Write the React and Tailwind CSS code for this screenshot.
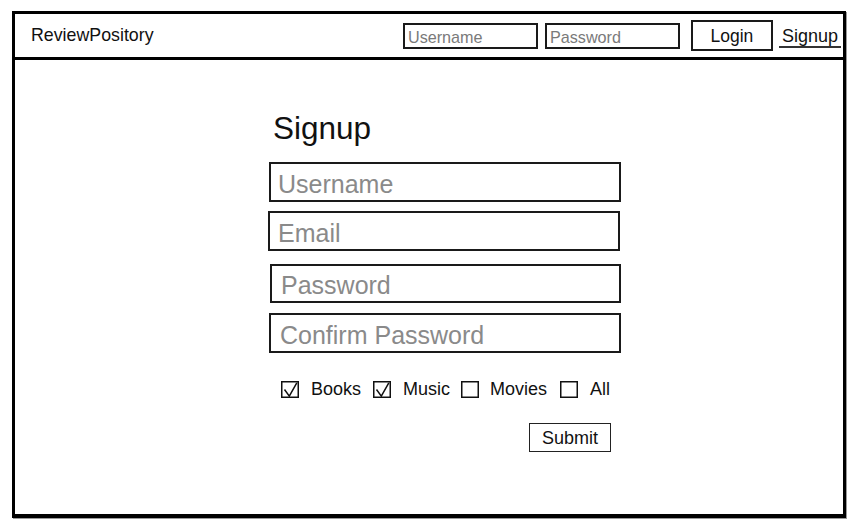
import React from "react";

const font = { fontFamily: '"Liberation Sans", Arial, Helvetica, sans-serif' };

function Box({ checked }) {
  return (
    <svg width="18" height="17" viewBox="0 0 18 17" className="shrink-0">
      <rect x="0.75" y="0.75" width="16.5" height="15.5" fill="white" stroke="#111" strokeWidth="1.5" />
      {checked && (
        <path d="M3.5 8.5 L8.3 15.2 L15.8 1.8" fill="none" stroke="#111" strokeWidth="1.5" strokeLinejoin="miter" />
      )}
    </svg>
  );
}

export default function App() {
  return (
    <div className="w-[860px] h-[530px] bg-white overflow-hidden font-['Liberation_Sans',Arial,sans-serif] text-[#111]" style={font}>
      <div className="ml-[12px] mt-[11px] w-[834px] h-[507px] border-[3px] border-b-[4px] border-black shadow-[1px_1px_0_#9a9a9a] flex flex-col">
        {/* header */}
        <div className="h-[46px] border-b-[3px] border-black flex items-center pl-[16px] pr-[2px] shrink-0">
          <div className="text-[17.8px] leading-none pt-[1px]">ReviewPository</div>
          <div className="ml-auto flex items-center">
            <input
              placeholder="Username"
              className="w-[135px] h-[26px] border-2 border-[#1a1a1a] pl-[3px] pt-[3px] text-[16.2px] leading-none outline-none placeholder:text-[#7a7a7a]"
            />
            <input
              type="password"
              placeholder="Password"
              className="ml-[7px] w-[135px] h-[26px] border-2 border-[#1a1a1a] pl-[3px] pt-[3px] text-[16.2px] leading-none outline-none placeholder:text-[#7a7a7a]"
            />
            <button className="ml-[11px] w-[82px] h-[31px] border-2 border-[#1a1a1a] text-[17.5px] leading-none flex items-center justify-center pt-[3px]">
              Login
            </button>
            <div className="ml-[6px] mt-[4px] px-[3px] pb-[1px] border-b-2 border-[#333] text-[18px] leading-none">
              Signup
            </div>
          </div>
        </div>

        {/* main */}
        <div className="flex-1 pt-[53px]">
          <div className="ml-[254px] w-[352px] flex flex-col">
            <div className="pl-[4px] text-[31.5px] leading-none h-[30px]">Signup</div>
            <input
              placeholder="Username"
              className="mt-[19px] w-[352px] h-[40px] border-2 border-[#1a1a1a] pl-[7px] pt-[4px] text-[25px] leading-none outline-none placeholder:text-[#8a8a8a]"
            />
            <input
              placeholder="Email"
              className="mt-[9px] -ml-[1px] w-[352px] h-[40px] border-2 border-[#1a1a1a] pl-[8px] pt-[4px] text-[25px] leading-none outline-none placeholder:text-[#8a8a8a]"
            />
            <input
              type="password"
              placeholder="Password"
              className="mt-[13px] ml-[1px] w-[351px] h-[39px] border-2 border-[#1a1a1a] pl-[9px] pt-[4px] text-[25px] leading-none outline-none placeholder:text-[#8a8a8a]"
            />
            <input
              type="password"
              placeholder="Confirm Password"
              className="mt-[10px] w-[352px] h-[40px] border-2 border-[#1a1a1a] pl-[9px] pt-[4px] text-[25px] leading-none outline-none placeholder:text-[#8a8a8a]"
            />

            <div className="mt-[27px] ml-[12px] h-[18px] flex items-center text-[18px] leading-none">
              <Box checked />
              <span className="ml-[12px]">Books</span>
              <span className="ml-[12px]"><Box checked /></span>
              <span className="ml-[12px]">Music</span>
              <span className="ml-[11px]"><Box /></span>
              <span className="ml-[11px]">Movies</span>
              <span className="ml-[13px]"><Box /></span>
              <span className="ml-[12px]">All</span>
            </div>

            <div className="mt-[25px] flex justify-end pr-[10px]">
              <button className="w-[82px] h-[29px] border-[1.5px] border-[#222] text-[18px] leading-none flex items-center justify-center pt-[1px]">
                Submit
              </button>
            </div>
          </div>
        </div>
      </div>
    </div>
  );
}
